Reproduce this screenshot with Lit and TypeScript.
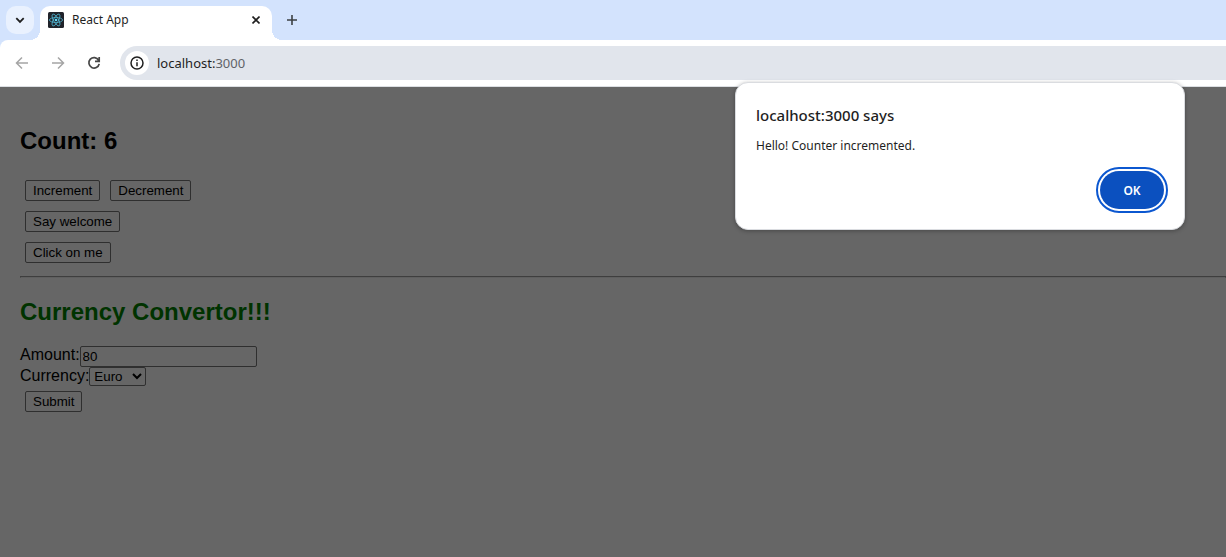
import { LitElement, html, css } from "lit";
import { customElement, state } from "lit/decorators.js";

@customElement("browser-chrome")
class BrowserChrome extends LitElement {
  static styles = css`
    :host {
      display: block;
      font-family: "Noto Sans", "Open Sans", sans-serif;
      color: #1f1f1f;
    }
    button {
      display: flex;
      align-items: center;
      justify-content: center;
      padding: 0;
      border: 0;
      background: transparent;
      color: inherit;
    }
    svg {
      display: block;
      fill: none;
      stroke: currentColor;
    }
    .strip {
      display: flex;
      align-items: flex-start;
      height: 34px;
      padding: 6px 6px 0;
      background: #d3e3fd;
    }
    .search {
      width: 28px;
      height: 28px;
      border-radius: 10px;
      background: #e9f1fe;
    }
    .tab {
      position: relative;
      box-sizing: border-box;
      display: flex;
      align-items: center;
      gap: 8px;
      width: 232px;
      height: 34px;
      margin-left: 6px;
      padding: 0 8px 6px;
      border-radius: 10px 10px 0 0;
      background: #fff;
    }
    .tab::before,
    .tab::after {
      content: "";
      position: absolute;
      bottom: 0;
      width: 10px;
      height: 10px;
    }
    .tab::before {
      right: 100%;
      background: radial-gradient(circle at 0 0, transparent 10px, #fff 10px);
    }
    .tab::after {
      left: 100%;
      background: radial-gradient(circle at 100% 0, transparent 10px, #fff 10px);
    }
    .title {
      flex: 1;
      font-size: 12px;
      line-height: 18px;
    }
    .close {
      width: 16px;
      height: 16px;
    }
    .add {
      width: 28px;
      height: 28px;
      margin-left: 6px;
      color: #3c4043;
    }
    .bar-back {
      background: #d3e3fd;
    }
    .bar {
      display: flex;
      align-items: center;
      height: 46px;
      padding-left: 8px;
      border-bottom: 1px solid #dcdfe3;
      border-radius: 8px 0 0 0;
      background: #fff;
    }
    .nav {
      width: 28px;
      height: 28px;
      margin-right: 8px;
      color: #474747;
    }
    .nav:disabled {
      color: #a5a5a5;
    }
    .address {
      flex: 1;
      display: flex;
      align-items: center;
      gap: 8px;
      height: 34px;
      margin-left: 4px;
      padding-left: 5px;
      border-radius: 17px 0 0 17px;
      background: #e1e5ec;
    }
    .info {
      width: 24px;
      height: 24px;
      border-radius: 50%;
      background: #fff;
    }
    .url {
      font-size: 13px;
      line-height: 20px;
    }
    .port {
      color: #5f6368;
    }
  `;

  render() {
    return html`
      <div class="strip">
        <button class="search" aria-label="Search tabs">
          <svg width="10" height="10" viewBox="0 0 10 10" stroke-width="1.8">
            <path d="M1.3 3.2 5 6.9 8.7 3.2" />
          </svg>
        </button>
        <div class="tab">
          <svg width="16" height="16" viewBox="0 0 16 16">
            <rect width="16" height="16" rx="1.5" fill="#20232a" stroke="none" />
            <g stroke="#4fb3cf" stroke-width="0.8">
              <ellipse cx="8" cy="8" rx="6.6" ry="2.5" />
              <ellipse cx="8" cy="8" rx="6.6" ry="2.5" transform="rotate(60 8 8)" />
              <ellipse cx="8" cy="8" rx="6.6" ry="2.5" transform="rotate(120 8 8)" />
            </g>
            <circle cx="8" cy="8" r="1.3" fill="#61dafb" stroke="none" />
          </svg>
          <span class="title">React App</span>
          <button class="close" aria-label="Close tab">
            <svg width="8" height="8" viewBox="0 0 8 8" stroke-width="1.6">
              <path d="M0.5 0.5 7.5 7.5M7.5 0.5 0.5 7.5" />
            </svg>
          </button>
        </div>
        <button class="add" aria-label="New tab">
          <svg width="12" height="12" viewBox="0 0 12 12" stroke-width="1.6">
            <path d="M6 1v10M1 6h10" />
          </svg>
        </button>
      </div>
      <div class="bar-back">
        <div class="bar">
          <button class="nav" aria-label="Back" disabled>
            <svg width="14" height="14" viewBox="0 0 14 14" stroke-width="1.5">
              <path d="M13 7H1.8M7 1.5 1.5 7 7 12.5" />
            </svg>
          </button>
          <button class="nav" aria-label="Forward" disabled>
            <svg width="14" height="14" viewBox="0 0 14 14" stroke-width="1.5">
              <path d="M1 7h11.2M7 1.5 12.5 7 7 12.5" />
            </svg>
          </button>
          <button class="nav" aria-label="Reload">
            <svg width="14" height="14" viewBox="0 0 14 14" stroke-width="1.7">
              <path d="M11.6 4.2A5.2 5.2 0 1 0 12.2 7.8M12.2 1v4.3H8" />
            </svg>
          </button>
          <div class="address">
            <button class="info" aria-label="View site information">
              <svg width="14" height="14" viewBox="0 0 14 14" stroke-width="1.5">
                <circle cx="7" cy="7" r="6" />
                <path d="M7 6.2v4M7 3.6v1.5" />
              </svg>
            </button>
            <span class="url">localhost:<span class="port">3000</span></span>
          </div>
        </div>
      </div>
    `;
  }
}

@customElement("counter-page")
class CounterPage extends LitElement {
  static styles = css`
    :host {
      display: block;
      padding: 20px 0 20px 20px;
      background: #666;
      color: #000;
      font-family: "Liberation Sans", Arial, sans-serif;
      font-size: 16px;
    }
    h2 {
      margin: 20px 0;
      font-size: 24px;
      line-height: 28px;
    }
    .green {
      color: #003300;
    }
    .row {
      display: flex;
    }
    button,
    input,
    select {
      box-sizing: border-box;
      border: 1px solid #2f2f2f;
      border-radius: 2px;
      background-color: #666;
      color: #000;
      font-family: inherit;
    }
    button {
      height: 21px;
      margin: 5px;
      padding: 0 7px;
      line-height: 15px;
    }
    hr {
      height: 2px;
      margin: 8px 0 20px;
      box-sizing: border-box;
      border: 1px solid #3e3e3e;
      border-bottom-color: #5f5f5f;
    }
    label {
      line-height: 18px;
    }
    input {
      width: 177px;
      height: 21px;
      padding: 1px 2px;
    }
    select {
      width: 57px;
      height: 19px;
      padding: 0;
    }
  `;

  @state() private count = 6;

  render() {
    return html`
      <h2>Count: ${this.count}</h2>
      <div class="row">
        <button @click=${() => this.count++}>Increment</button>
        <button @click=${() => this.count--}>Decrement</button>
      </div>
      <div class="row"><button>Say welcome</button></div>
      <div class="row"><button>Click on me</button></div>
      <hr />
      <h2 class="green">Currency Convertor!!!</h2>
      <div class="row">
        <label for="amount">Amount:</label>
        <input id="amount" type="text" value="80" />
      </div>
      <div class="row">
        <label for="currency">Currency:</label>
        <select id="currency">
          <option>Euro</option>
        </select>
      </div>
      <div class="row"><button>Submit</button></div>
    `;
  }
}

@customElement("alert-dialog")
class AlertDialog extends LitElement {
  static styles = css`
    :host {
      box-sizing: border-box;
      display: flex;
      flex-direction: column;
      width: 450px;
      padding: 20px;
      border: 1px solid #dadce0;
      border-radius: 13px;
      background: #fff;
      box-shadow: 0 1px 4px rgba(0, 0, 0, 0.3);
      color: #1f1f1f;
      font-family: "Noto Sans", "Open Sans", sans-serif;
    }
    h1 {
      margin: 0;
      font-size: 15px;
      font-weight: 500;
      line-height: 24px;
    }
    p {
      margin: 8px 0 0;
      font-size: 12px;
      line-height: 22px;
    }
    button {
      align-self: flex-end;
      width: 64px;
      height: 38px;
      margin-top: 14px;
      padding: 0;
      border: 0;
      border-radius: 19px;
      outline: 2px solid #0b57d0;
      outline-offset: 2px;
      background: #0b50bf;
      color: #fff;
      font-family: inherit;
      font-size: 12px;
      font-weight: 600;
    }
  `;

  render() {
    return html`
      <h1>localhost:3000 says</h1>
      <p>Hello! Counter incremented.</p>
      <button>OK</button>
    `;
  }
}

@customElement("app-root")
class AppRoot extends LitElement {
  static styles = css`
    :host {
      position: relative;
      display: flex;
      flex-direction: column;
      min-height: 100vh;
      overflow: hidden;
    }
    counter-page {
      flex: 1;
    }
    alert-dialog {
      position: absolute;
      top: 82px;
      right: 41px;
    }
  `;

  render() {
    return html`
      <browser-chrome></browser-chrome>
      <counter-page></counter-page>
      <alert-dialog role="alertdialog" aria-label="localhost:3000 says"></alert-dialog>
    `;
  }
}
